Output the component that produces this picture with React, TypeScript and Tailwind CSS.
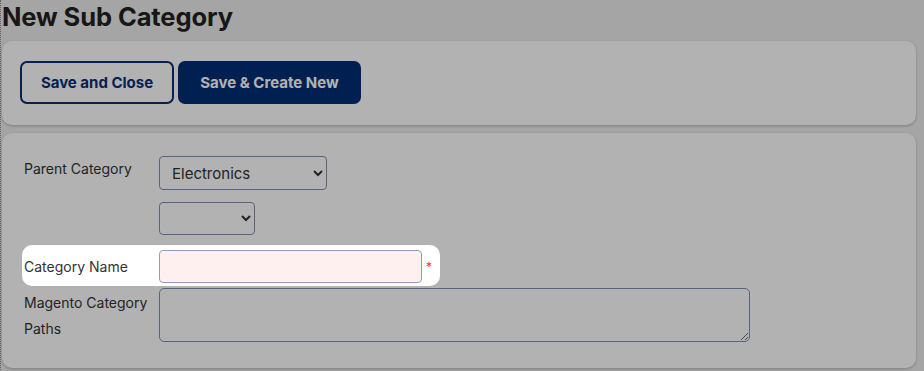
import React from "react";

export default function App() {
  return (
    <div
      className="min-h-screen bg-[#ededed] border-l border-dotted border-[#8a8a8a] pr-[8px] pb-[4px]"
      style={{ fontFamily: "Inter, 'Noto Sans', sans-serif" }}
    >
      <h1 className="pl-[1px] pt-[1px] text-[25.5px] leading-[31px] font-bold text-[#222] tracking-[-0.1px]">
        New Sub Category
      </h1>

      <div className="mt-[9px] ml-[1px] h-[84px] rounded-[10px] bg-white shadow-[0_1px_3px_rgba(0,0,0,0.25)] pl-[18px] pt-[20px] flex gap-[4px] items-start">
        <button className="h-[43px] w-[154px] rounded-[7px] border-2 border-[#0a2f73] bg-white text-[#0a2f73] text-[15px] font-bold pt-[2px]">
          Save and Close
        </button>
        <button className="h-[43px] w-[183px] rounded-[7px] bg-[#002f75] text-white text-[15px] font-bold pt-[2px]">
          Save &amp; Create New
        </button>
      </div>

      <div className="mt-[8px] ml-[1px] rounded-[10px] bg-white shadow-[0_1px_3px_rgba(0,0,0,0.25)] pl-[20px] pt-[23px] pb-[26px] flex flex-col items-start text-[14px] text-[#333]">
        <div className="flex">
          <div className="w-[137px] pl-[2px] pt-[3px] leading-[20px]">Parent Category</div>
          <div className="flex flex-col gap-[12px]">
            <select className="h-[34px] w-[168px] rounded-[4px] border border-[#7d90b8] bg-transparent pl-[8px] text-[15px] text-[#333] outline-none">
              <option>Electronics</option>
            </select>
            <select className="h-[33px] w-[96px] rounded-[4px] border border-[#7d90b8] bg-transparent pl-[8px] text-[15px] text-[#333] outline-none">
              <option></option>
            </select>
          </div>
        </div>

        <div className="relative z-10 mt-[10px] flex items-center rounded-[10px] bg-white pt-[5px] pb-[3px] pr-[8px] shadow-[0_0_0_9999px_rgba(0,0,0,0.3)]">
          <div className="w-[137px] pl-[2px] leading-[20px]">Category Name</div>
          <input className="h-[33px] w-[263px] rounded-[4px] border border-[#8d9ec2] bg-[#fff0f0] outline-none" />
          <span className="ml-[4px] text-[12px] text-[#ff2b2b] leading-none">*</span>
        </div>

        <div className="mt-[2px] flex">
          <div className="w-[137px] pl-[2px] pt-[2px] leading-[26px]">
            Magento Category
            <br />
            Paths
          </div>
          <textarea className="h-[54px] w-[591px] rounded-[5px] border border-[#7d90b8] bg-transparent outline-none" />
        </div>
      </div>
    </div>
  );
}
